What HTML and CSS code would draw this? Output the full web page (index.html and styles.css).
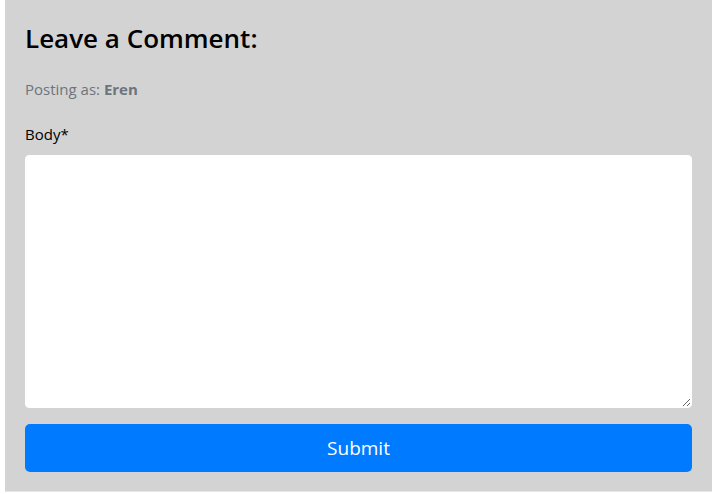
FILE: index.html
```html
<!DOCTYPE html>
<html>
<head>
<meta charset="utf-8">
<link rel="stylesheet" href="styles.css">
</head>
<body>
<div class="panel">
  <h3 class="title">Leave a Comment:</h3>
  <p class="posting">Posting as: <strong>Eren</strong></p>
  <form class="form">
    <label class="label" for="body">Body*</label>
    <textarea id="body" class="textarea"></textarea>
    <button type="button" class="submit">Submit</button>
  </form>
</div>
</body>
</html>
```
FILE: styles.css
```css
html, body {
  margin: 0;
  padding: 0;
  background: #ffffff;
  height: 100%;
}
body {
  font-family: "Open Sans", "Noto Sans", sans-serif;
  color: #000;
}
.panel {
  margin-left: 5px;
  height: 492px;
  box-sizing: border-box;
  background: #d3d3d3;
  padding: 22px 20px 20px 20px;
  border-bottom: 1px solid #e6e6e6;
}
.title {
  margin: 0;
  font-size: 26px;
  font-weight: 600;
  line-height: 32px;
}
.posting {
  margin: 24px 0 0 0;
  font-size: 15px;
  line-height: 22px;
  color: #6c757d;
}
.posting strong {
  font-weight: 700;
}
.form {
  display: flex;
  flex-direction: column;
  margin-top: 23px;
}
.label {
  font-size: 15px;
  line-height: 22px;
  margin-bottom: 10px;
}
.textarea {
  height: 253px;
  box-sizing: border-box;
  border: 1px solid #ffffff;
  border-radius: 4px;
  background: #fff;
  resize: vertical;
  margin: 0;
}
.submit {
  margin-top: 16px;
  height: 48px;
  border: none;
  border-radius: 5px;
  background: #007bff;
  color: #fff;
  font-family: "Open Sans", "Noto Sans", sans-serif;
  font-size: 19px;
}
```
